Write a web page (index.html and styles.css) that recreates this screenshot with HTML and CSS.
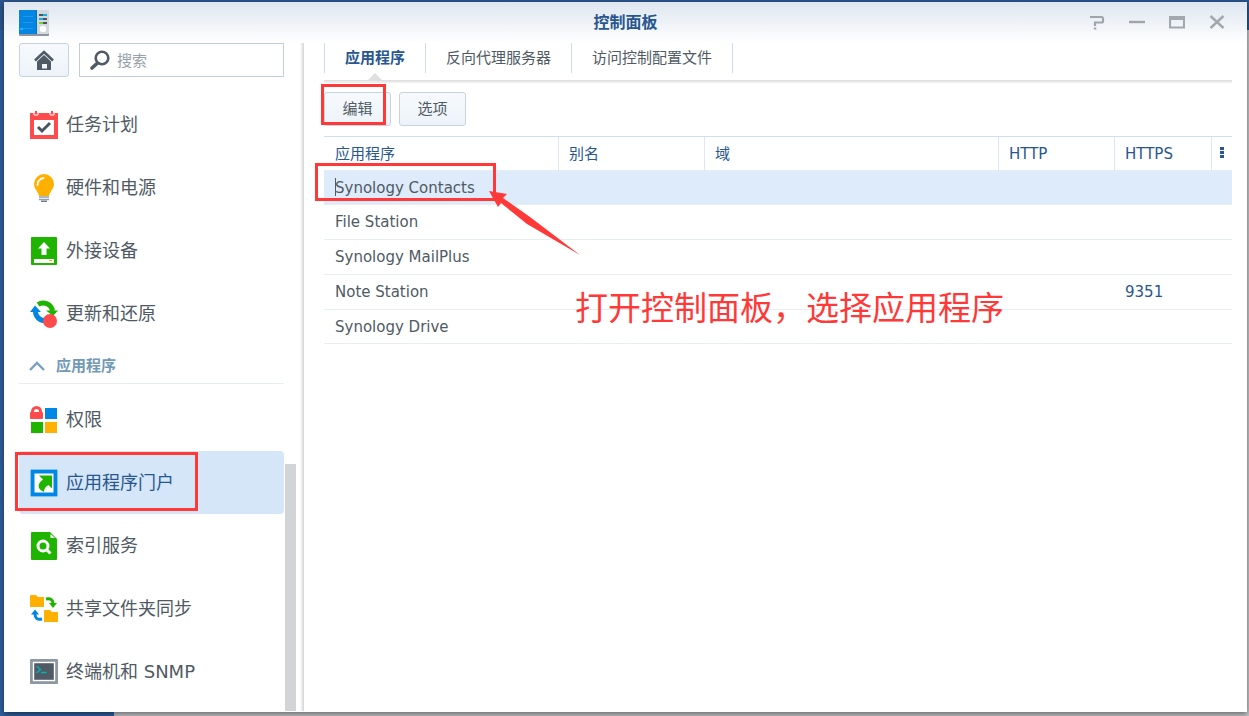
FILE: index.html
```html
<!DOCTYPE html>
<html lang="zh-CN">
<head>
    <meta charset="UTF-8">
    <title>控制面板</title>
    <link rel="stylesheet" href="styles.css">
</head>
<body>

<div class="window">
    <header class="titlebar">
        <svg class="app-icon" width="30" height="26" viewBox="0 0 30 26">
            <rect x="0" y="1" width="30" height="25" rx="1" fill="#8d959d"/>
            <rect x="17" y="0" width="13" height="24" rx="1" fill="#d3d8dc"/>
            <rect x="0" y="0" width="17" height="24" fill="#0585e2"/>
            <rect x="17" y="0" width="1" height="24" fill="#0670c2"/>
            <path d="M4 6.500h10M4 12.500h10M4 18.500h10" stroke="#199cf0"/>
            <rect x="1" y="18" width="3" height="2" fill="#16b5ff"/>
            <path d="M20 5h8M20 9h8M20 13h8" stroke="#4b5661" stroke-width="2"/>
            <path d="M24 5h4M20 9h4" stroke="#12aef0" stroke-width="2"/>
            <path d="M20 13h4" stroke="#7ed321" stroke-width="2"/>
            <circle cx="24" cy="19" r="3.200" fill="#fff"/>
        </svg>
        <h1>控制面板</h1>
        <div class="controls">
            <button type="button" aria-label="帮助"><svg width="16" height="16" viewBox="0 0 16 16"><path d="M1 2h11.500q1.500 0 1.500 1.500V6q0 1.500-1.500 1.500H6V11M4.800 13.500h2.500" fill="none" stroke="#a0a5ab" stroke-width="2.200"/></svg></button>
            <button type="button" aria-label="最小化"><svg width="16" height="16" viewBox="0 0 16 16"><path d="M0 7h16" stroke="#a0a5ab" stroke-width="2.400"/></svg></button>
            <button type="button" aria-label="最大化"><svg width="16" height="16" viewBox="0 0 16 16"><path d="M1 2h14v10.500H1zM1 4h14" fill="none" stroke="#a3a8af" stroke-width="2.200"/></svg></button>
            <button type="button" aria-label="关闭"><svg width="16" height="16" viewBox="0 0 16 16"><path d="M1.500 1l13 12M14.500 1l-13 12" stroke="#a3a8ad" stroke-width="2.400"/></svg></button>
        </div>
    </header>

    <div class="body">
        <aside class="sidebar">
            <div class="tools">
                <button class="btn home" type="button" aria-label="主页">
                    <svg width="20" height="20" viewBox="0 0 20 20"><path d="M1 10.500L10 2l9 8.500" fill="none" stroke="#505a64" stroke-width="2.600"/><path d="M3 11.500L10 5l7 6.500V20h-4v-6H8v6H3zM3 18.500h14V20H3z" fill="#505a64"/></svg>
                </button>
                <label class="search">
                    <svg width="20" height="20" viewBox="0 0 20 20"><circle cx="12" cy="8" r="6.300" fill="none" stroke="#505a64" stroke-width="2.600"/><path d="M7 13.500L2 18" stroke="#505a64" stroke-width="3.600" stroke-linecap="round"/></svg>
                    <input type="text" placeholder="搜索" aria-label="搜索">
                </label>
            </div>

            <div class="scroller">
                <nav class="menu">
                    <a class="item" href="#">
                        <svg width="28" height="28" viewBox="0 0 28 28"><path d="M0 2h5V0h2v2h14V0h2v2h5v26H0z" fill="#ff4b4b"/><path d="M4 0v4h4V0M20 0v4h4V0" fill="none" stroke="#fff"/><rect x="4" y="9" width="20" height="15" fill="#fff"/><path d="M8 16l4 4 8-8" fill="none" stroke="#4b5661" stroke-width="3"/></svg>
                        任务计划
                    </a>
                    <a class="item" href="#">
                        <svg width="28" height="28" viewBox="0 0 28 28"><path d="M14 0a10 10 0 0 0-10 10c0 5 4 7 5 12h10c1-5 5-7 5-12A10 10 0 0 0 14 0z" fill="#ffb000"/><path d="M7.500 11a7 7 0 0 1 6-7" fill="none" stroke="#fff" stroke-width="1.800" stroke-linecap="round"/><path d="M9 23h10M9 25.500h10" stroke="#98a0a9" stroke-width="1.400"/><path d="M11 27.300h6" stroke="#6e7780" stroke-width="1.400"/></svg>
                        硬件和电源
                    </a>
                    <a class="item" href="#">
                        <svg width="28" height="28" viewBox="0 0 28 28"><rect x="1" y="0" width="26" height="28" rx="1" fill="#1fb400"/><path d="M14 5l6 6.500h-3.500V18h-5v-6.500H8z" fill="#fff"/><rect x="4" y="22" width="20" height="4" fill="#fff"/><rect x="19" y="23" width="3" height="1" fill="#ffb000"/></svg>
                        外接设备
                    </a>
                    <a class="item" href="#">
                        <svg width="28" height="28" viewBox="0 0 28 28"><path d="M8 4.500A9.500 9.500 0 0 1 22.500 11" fill="none" stroke="#1fb400" stroke-width="5"/><path d="M16 10.500h12L23 16z" fill="#1fb400"/><path d="M5.500 11.500a9 9 0 0 0 9 9" fill="none" stroke="#0086e5" stroke-width="5"/><path d="M0 12h11L5 5.500z" fill="#0086e5"/><circle cx="20" cy="21" r="7" fill="#ff4b4b"/></svg>
                        更新和还原
                    </a>
                    <h2 class="group">
                        <svg width="16" height="10" viewBox="0 0 16 10"><path d="M1 9l7-7 7 7" fill="none" stroke="#7ba0bb" stroke-width="2.400"/></svg>
                        应用程序
                    </h2>
                    <a class="item" href="#">
                        <svg width="28" height="28" viewBox="0 0 28 28"><path d="M2.500 7V5.500a4 4 0 0 1 8 0V7" fill="none" stroke="#ff4b4b" stroke-width="3"/><rect x="0" y="6" width="13" height="7" rx="1" fill="#ff4b4b"/><rect x="15" y="2" width="12" height="11" fill="#0086e5"/><rect x="1" y="16" width="12" height="11" fill="#1fb400"/><rect x="15" y="16" width="12" height="11" fill="#ffb000"/></svg>
                        权限
                    </a>
                    <a class="item active" href="#">
                        <svg width="28" height="28" viewBox="0 0 28 28"><rect x="0" y="0" width="28" height="28" fill="#fff"/><rect x="2.500" y="2.500" width="23" height="23" fill="none" stroke="#0086e5" stroke-width="4"/><path d="M9 6.500h13v13L18.500 16C15 18 14 20 14 23 6.500 20 7.500 14 13 10.500z" fill="#1fb400"/></svg>
                        应用程序门户
                    </a>
                    <a class="item" href="#">
                        <svg width="28" height="28" viewBox="0 0 28 28"><path d="M2 0h18l7 7v20q0 1-1 1H2q-1 0-1-1V1q0-1 1-1z" fill="#1fb400"/><path d="M20.500 2v4H25z" fill="#fff"/><circle cx="13" cy="14" r="5" fill="none" stroke="#fff" stroke-width="3"/><path d="M16.500 17.500l4 4" stroke="#fff" stroke-width="3"/></svg>
                        索引服务
                    </a>
                    <a class="item" href="#">
                        <svg width="28" height="28" viewBox="0 0 28 28"><path d="M0 1q0-1 1-1h5l2 2h6v10H0zM14 16q0-1 1-1h5l2 2h6v10H14z" fill="#ffb000"/><path d="M16 4c5-1 7 1 7 5" fill="none" stroke="#1fb400" stroke-width="3"/><path d="M19 8h8l-4 5z" fill="#1fb400"/><path d="M12 24c-5 1-7-1-7-5" fill="none" stroke="#0086e5" stroke-width="3"/><path d="M1 19.500h8l-4-5z" fill="#0086e5"/></svg>
                        共享文件夹同步
                    </a>
                    <a class="item" href="#">
                        <svg width="28" height="28" viewBox="0 0 28 28"><rect x="0" y="1" width="28" height="25" rx="1" fill="#8e98a2"/><rect x="3.500" y="4.500" width="21" height="18" fill="#505a64" stroke="#fff" stroke-width="1.400"/><path d="M6.500 8l4 3.500-4 3.500M11 14.500h5.500" fill="none" stroke="#00b5b5" stroke-width="1.400"/></svg>
                        终端机和 SNMP
                    </a>
                </nav>
                <div class="track"><div class="thumb"></div></div>
            </div>
        </aside>

        <main class="content">
            <nav class="tabs">
                <a class="tab current" href="#">应用程序</a>
                <a class="tab" href="#">反向代理服务器</a>
                <a class="tab" href="#">访问控制配置文件</a>
            </nav>

            <div class="toolbar">
                <button class="btn" type="button">编辑</button>
                <button class="btn" type="button">选项</button>
            </div>

            <table class="grid">
                <colgroup>
                    <col class="col-app">
                    <col class="col-alias">
                    <col>
                    <col class="col-http">
                    <col class="col-https">
                    <col class="col-more">
                </colgroup>
                <thead>
                    <tr><th>应用程序</th><th>别名</th><th>域</th><th>HTTP</th><th>HTTPS</th><th class="more"><button type="button" aria-label="更多"><svg width="4" height="12" viewBox="0 0 4 12"><path d="M0 0h4v3H0zM0 4h4v3H0zM0 8h4v3H0z" fill="#285690"/></svg></button></th></tr>
                </thead>
                <tbody>
                    <tr class="selected"><td><span class="caret"></span>Synology Contacts</td><td></td><td></td><td></td><td></td><td></td></tr>
                    <tr><td>File Station</td><td></td><td></td><td></td><td></td><td></td></tr>
                    <tr><td>Synology MailPlus</td><td></td><td></td><td></td><td></td><td></td></tr>
                    <tr><td>Note Station</td><td></td><td></td><td></td><td class="port">9351</td><td></td></tr>
                    <tr><td>Synology Drive</td><td></td><td></td><td></td><td></td><td></td></tr>
                </tbody>
            </table>
        </main>
    </div>
</div>

<!-- annotations over the window -->
<div class="mark mark-edit"></div>
<div class="mark mark-row"></div>
<div class="mark mark-portal"></div>
<svg class="arrow" width="92" height="65" viewBox="0 0 92 65"><path d="M0 0L18 3L14 7L41 26L91 64L38 33L12 12L9 16z" fill="#ff3938"/></svg>
<p class="note">打开控制面板，选择应用程序</p>

</body>
</html>
```
FILE: styles.css
```css
* {
    box-sizing: border-box;
}
body {
    margin: 0;
    padding: 2px 2px 4px 4px;
    height: 100vh;
    overflow: hidden;
    font-family: "DejaVu Sans", "Noto Sans CJK SC", sans-serif;
    font-size: 15px;
    line-height: 20px;
    color: #505a64;
    background:
        linear-gradient(#2c568e, #2c568e) top / 100% 30px no-repeat,
        linear-gradient(#2f5f9d, #2f5f9d) left / 114px 100% no-repeat,
        #c3c5c7;
}
a {
    color: inherit;
    text-decoration: none;
}
button, input {
    font: inherit;
    color: inherit;
}
svg {
    display: block;
    flex: none;
}

/* window */
.window {
    display: flex;
    flex-direction: column;
    height: 100%;
    background: linear-gradient(#dee6f0, #fff 41px);
    box-shadow: 0 2px 6px rgba(0, 0, 0, 0.5);
}
.titlebar {
    display: grid;
    grid-template-columns: 1fr auto 1fr;
    align-items: center;
    height: 41px;
    padding: 0 15px;
}
.titlebar h1 {
    margin: 0;
    font-size: 16px;
    line-height: 24px;
    color: #285690;
}
.controls {
    display: flex;
    justify-content: flex-end;
    gap: 24px;
    padding-right: 7px;
}
.controls button, .more button {
    padding: 0;
    border: 0;
    background: none;
}
.body {
    display: flex;
    flex: 1;
    min-height: 0;
    padding: 0 15px 1px;
}

/* sidebar */
.sidebar {
    display: flex;
    flex-direction: column;
    width: 285px;
    padding-right: 8px;
    background: linear-gradient(to right, #fff, #d4d4d4) right / 4px 100% no-repeat;
}
.tools {
    display: flex;
    gap: 10px;
    padding-right: 12px;
}
.btn {
    min-width: 67px;
    height: 34px;
    padding: 0 16px;
    border: 1px solid #c6d4e0;
    border-radius: 3px;
    background: linear-gradient(#f6faff, #edf3f8);
}
.home {
    min-width: 0;
    width: 50px;
    padding: 0 14px;
}
.search {
    display: flex;
    flex: 1;
    align-items: center;
    gap: 7px;
    height: 34px;
    padding: 0 10px;
    border: 1px solid #c1cfdb;
    background: #fff;
}
.search input {
    width: 100%;
    min-width: 0;
    padding: 2px 0 0;
    border: 0;
    outline: 0;
    background: none;
}
.search input::placeholder {
    color: #98a1aa;
    opacity: 1;
}
.scroller {
    display: flex;
    flex: 1;
    gap: 1px;
    min-height: 0;
}
.menu {
    flex: 1;
    padding-top: 16px;
    overflow: hidden;
}
.item {
    display: flex;
    align-items: center;
    gap: 8px;
    height: 63px;
    padding-left: 11px;
    border-radius: 4px;
    font-size: 18px;
    line-height: 24px;
}
.item.active {
    color: #285690;
    background: #d5e6f8;
}
.group {
    display: flex;
    align-items: center;
    gap: 11px;
    height: 39px;
    margin: 0 0 4px;
    padding: 4px 0 0 10px;
    border-bottom: 1px solid #e8edf0;
    font-size: 15px;
    line-height: 20px;
    color: #7299b5;
}
.track {
    display: flex;
    align-items: flex-end;
    width: 11px;
}
.thumb {
    width: 100%;
    height: 39%;
    background: #d3d4d5;
}

/* content */
.content {
    flex: 1;
    min-width: 0;
    padding-left: 20px;
}
.tabs {
    display: flex;
    height: 40px;
    padding-bottom: 10px;
    background: linear-gradient(#dcdcdc, #f4f4f4) bottom / 100% 3px no-repeat;
}
.tab {
    position: relative;
    padding: 5px 20px;
    border-right: 1px solid #cfdbe8;
}
.tab:first-child {
    border-left: 1px solid #cfdbe8;
}
.current {
    font-weight: bold;
    color: #285690;
}
.current::after {
    content: "";
    position: absolute;
    left: 50%;
    bottom: -8px;
    margin-left: -8px;
    border: 8px solid transparent;
    border-top: 0;
    border-bottom-color: #e0e0e0;
}
.toolbar {
    display: flex;
    gap: 8px;
    padding: 9px 0 10px;
}
.grid {
    width: 100%;
    table-layout: fixed;
    border-collapse: separate;
    border-spacing: 0;
    border-top: 1px solid #cfdfee;
}
.col-app {
    width: 235px;
}
.col-alias {
    width: 146px;
}
.col-http {
    width: 116px;
}
.col-https {
    width: 97px;
}
.col-more {
    width: 20px;
}
.grid th {
    height: 34px;
    padding: 0 10px;
    border-right: 1px solid #dce7f3;
    border-bottom: 1px solid #e6edf4;
    font-weight: normal;
    text-align: left;
    color: #285690;
}
.grid th:first-child, .grid td:first-child {
    padding-left: 11px;
}
.grid .more {
    padding: 0 8px;
    border-right: 0;
}
.grid td {
    height: 35px;
    padding: 0 10px;
    border-bottom: 1px solid #e8edf1;
}
.grid tr:last-child td, .grid .selected td {
    height: 34px;
}
.selected td {
    background: #deebfb;
}
.grid .port {
    color: #285690;
}
.caret {
    position: absolute;
    width: 1px;
    height: 18px;
    background: #505a64;
}

/* annotations */
.mark {
    position: absolute;
    border: 3px solid #ff3938;
}
.mark-edit {
    left: 321px;
    top: 84px;
    width: 65px;
    height: 41px;
}
.mark-row {
    left: 315px;
    top: 163px;
    width: 181px;
    height: 38px;
}
.mark-portal {
    left: 15px;
    top: 452px;
    width: 183px;
    height: 59px;
}
.arrow {
    position: absolute;
    left: 489px;
    top: 191px;
}
.note {
    position: absolute;
    left: 575px;
    top: 285px;
    margin: 0;
    font-size: 33px;
    line-height: 48px;
    white-space: nowrap;
    color: #ff3938;
}
```
